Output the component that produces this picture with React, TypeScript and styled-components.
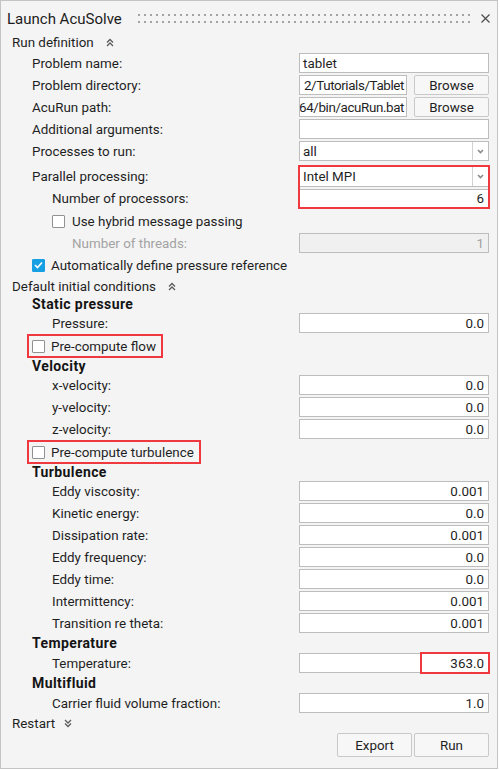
import React from "react";
import styled, { createGlobalStyle } from "styled-components";

const GlobalStyle = createGlobalStyle`
  html, body { margin: 0; padding: 0; background: #ffffff; }
  body {
    font-family: "Segoe UI", Roboto, "Liberation Sans", Arial, sans-serif;
    font-size: 13.4px;
    color: #1f1f1f;
  }
  * { box-sizing: border-box; }
`;

const Panel = styled.div`
  width: 498px;
  height: 769px;
  border: 1px solid #c4c4c4;
  background: #f4f4f4;
  display: flex;
  flex-direction: column;
`;

const TitleBar = styled.div`
  height: 31px;
  padding: 4px 7px 0 6px;
  display: flex;
  align-items: center;
`;

const Title = styled.span`
  font-size: 15px;
  color: #1c1c1c;
  white-space: nowrap;
`;

const Grip = styled.div`
  flex: 1;
  margin: 0 11px 0 16px;
  display: flex;
  flex-direction: column;
  gap: 5px;
`;

const DotRow = styled.div`
  height: 2px;
  background: repeating-linear-gradient(90deg, #a3a3a3 0 2px, transparent 2px 6px);
`;

const CloseButton = styled.span`
  width: 9px;
  height: 9px;
  display: flex;
`;

const SectionHeader = styled.div<{ $h?: number; $gap?: number }>`
  height: ${(p) => p.$h ?? 20}px;
  padding-left: 11px;
  display: flex;
  align-items: center;
  gap: ${(p) => p.$gap ?? 12}px;
  white-space: nowrap;
`;

const Chevron = styled.span`
  width: 8px;
  height: 9px;
  display: flex;
`;

const GroupTitle = styled.div<{ $h: number }>`
  height: ${(p) => p.$h}px;
  padding-left: 31px;
  display: flex;
  align-items: center;
  font-size: 14px;
  font-weight: 700;
  letter-spacing: 0.4px;
  color: #141414;
  white-space: nowrap;
`;

const Row = styled.div<{ $indent: number; $h?: number }>`
  height: ${(p) => p.$h ?? 22}px;
  padding-left: ${(p) => p.$indent}px;
  padding-right: 8px;
  display: flex;
  align-items: center;
`;

const Label = styled.span<{ $muted?: boolean }>`
  flex: 1;
  min-width: 0;
  white-space: nowrap;
  color: ${(p) => (p.$muted ? "#a3a3a3" : "#1f1f1f")};
`;

const Field = styled.div`
  position: relative;
  width: 190px;
  display: flex;
  align-items: center;
  gap: 7px;
`;

const TextBox = styled.div<{ $right?: boolean; $disabled?: boolean; $w?: number; $tight?: boolean }>`
  height: 20px;
  flex: ${(p) => (p.$w ? `0 0 ${p.$w}px` : "1")};
  min-width: 0;
  border: 1px solid #bdbdbd;
  background: ${(p) => (p.$disabled ? "#f0f0f0" : "#ffffff")};
  color: ${(p) => (p.$disabled ? "#a0a0a0" : "#1f1f1f")};
  display: flex;
  align-items: center;
  justify-content: ${(p) => (p.$right ? "flex-end" : "flex-start")};
  padding: ${(p) => (p.$tight ? "0 2px 0 1px" : "0 4px 0 3px")};
  letter-spacing: ${(p) => (p.$tight ? "-0.4px" : "normal")};
  overflow: hidden;
  white-space: nowrap;
`;

const Select = styled.div<{ $inBox?: boolean }>`
  height: 20px;
  flex: 1;
  background: #ffffff;
  border: ${(p) => (p.$inBox ? "none" : "1px solid #bdbdbd")};
  border-bottom: 1px solid #bdbdbd;
  display: flex;
  align-items: stretch;
`;

const SelectValue = styled.span`
  flex: 1;
  display: flex;
  align-items: center;
  padding-left: 3px;
  white-space: nowrap;
`;

const SelectArrow = styled.span`
  width: 16px;
  border-left: 1px solid #d2d2d2;
  display: flex;
  align-items: center;
  justify-content: center;
`;

const Button = styled.button<{ $h?: number }>`
  width: 75px;
  height: ${(p) => p.$h ?? 20}px;
  flex: 0 0 75px;
  border: 1px solid #c9c9c9;
  border-radius: 2px;
  background: #f7f7f7;
  color: #1f1f1f;
  font: inherit;
  padding: 0;
`;

const CheckRow = styled.div<{ $indent: number; $h?: number; $gap?: number }>`
  height: ${(p) => p.$h ?? 22}px;
  padding-left: ${(p) => p.$indent}px;
  display: flex;
  align-items: center;
  gap: ${(p) => p.$gap ?? 6}px;
  white-space: nowrap;
`;

const HighlightCheck = styled.div`
  height: 24px;
  border: 2px solid #f0393f;
  padding: 0 5px 0 3px;
  display: flex;
  align-items: center;
  gap: 6px;
  white-space: nowrap;
`;

const Box = styled.span<{ $checked?: boolean }>`
  width: 13px;
  height: 13px;
  flex: 0 0 13px;
  border: 1px solid ${(p) => (p.$checked ? "#179fe3" : "#929292")};
  background: ${(p) => (p.$checked ? "#179fe3" : "#ffffff")};
  border-radius: 1px;
  display: flex;
  align-items: center;
  justify-content: center;
`;

const ParallelGroup = styled.div`
  height: 48px;
  padding-left: 31px;
  padding-right: 7px;
  display: flex;
`;

const LabelStack = styled.div`
  flex: 1;
  display: flex;
  flex-direction: column;
  padding-top: 5px;
`;

const StackLabel = styled.div<{ $h: number; $indent?: number }>`
  height: ${(p) => p.$h}px;
  padding-left: ${(p) => p.$indent ?? 0}px;
  display: flex;
  align-items: center;
  white-space: nowrap;
`;

const RedFrame = styled.div`
  width: 192px;
  height: 44px;
  margin-top: 3px;
  border: 2px solid #f0393f;
  display: flex;
  flex-direction: column;
  gap: 2px;
`;

const FramedInput = styled.div`
  height: 18px;
  background: #ffffff;
  border-top: 1px solid #bdbdbd;
  display: flex;
  align-items: center;
  justify-content: flex-end;
  padding-right: 4px;
`;

const ValueMark = styled.div`
  position: absolute;
  top: -1px;
  bottom: -1px;
  right: -1px;
  width: 70px;
  border: 2px solid #f0393f;
  pointer-events: none;
`;

const Footer = styled.div`
  margin-top: 1px;
  padding-right: 8px;
  display: flex;
  justify-content: flex-end;
  gap: 2px;
`;

const Check = ({ checked }: { checked?: boolean }) => (
  <Box $checked={checked}>
    {checked && (
      <svg width="9" height="8" viewBox="0 0 9 8">
        <polyline points="1,4 3.5,6.5 8,1.5" fill="none" stroke="#ffffff" strokeWidth="1.6" />
      </svg>
    )}
  </Box>
);

const DoubleChevron = ({ down }: { down?: boolean }) => (
  <Chevron>
    <svg width="8" height="9" viewBox="0 0 8 9" style={down ? { transform: "rotate(180deg)" } : undefined}>
      <polyline points="1,4.5 4,1.5 7,4.5" fill="none" stroke="#5a5a5a" strokeWidth="1.3" />
      <polyline points="1,8 4,5 7,8" fill="none" stroke="#5a5a5a" strokeWidth="1.3" />
    </svg>
  </Chevron>
);

const Arrow = () => (
  <SelectArrow>
    <svg width="7" height="5" viewBox="0 0 7 5">
      <polyline points="1,1 3.5,3.5 6,1" fill="none" stroke="#8a8a8a" strokeWidth="1.6" />
    </svg>
  </SelectArrow>
);

const NumberRow = ({ label, value, indent = 51 }: { label: string; value: string; indent?: number }) => (
  <Row $indent={indent}>
    <Label>{label}</Label>
    <Field>
      <TextBox $right>{value}</TextBox>
    </Field>
  </Row>
);

const turbulence: [string, string][] = [
  ["Eddy viscosity:", "0.001"],
  ["Kinetic energy:", "0.0"],
  ["Dissipation rate:", "0.001"],
  ["Eddy frequency:", "0.0"],
  ["Eddy time:", "0.0"],
  ["Intermittency:", "0.001"],
  ["Transition re theta:", "0.001"],
];

const velocity: [string, string][] = [
  ["x-velocity:", "0.0"],
  ["y-velocity:", "0.0"],
  ["z-velocity:", "0.0"],
];

export default function App() {
  return (
    <>
      <GlobalStyle />
      <Panel>
        <TitleBar>
          <Title>Launch AcuSolve</Title>
          <Grip>
            <DotRow />
            <DotRow />
          </Grip>
          <CloseButton>
            <svg width="9" height="9" viewBox="0 0 9 9">
              <line x1="0.5" y1="0.5" x2="8.5" y2="8.5" stroke="#505050" strokeWidth="1.2" />
              <line x1="8.5" y1="0.5" x2="0.5" y2="8.5" stroke="#505050" strokeWidth="1.2" />
            </svg>
          </CloseButton>
        </TitleBar>

        <SectionHeader>
          Run definition
          <DoubleChevron />
        </SectionHeader>

        <Row $indent={31}>
          <Label>Problem name:</Label>
          <Field>
            <TextBox>tablet</TextBox>
          </Field>
        </Row>
        <Row $indent={31}>
          <Label>Problem directory:</Label>
          <Field>
            <TextBox $w={108} $right $tight>
              2/Tutorials/Tablet
            </TextBox>
            <Button>Browse</Button>
          </Field>
        </Row>
        <Row $indent={31}>
          <Label>AcuRun path:</Label>
          <Field>
            <TextBox $w={108} $right $tight>
              64/bin/acuRun.bat
            </TextBox>
            <Button>Browse</Button>
          </Field>
        </Row>
        <Row $indent={31}>
          <Label>Additional arguments:</Label>
          <Field>
            <TextBox />
          </Field>
        </Row>
        <Row $indent={31}>
          <Label>Processes to run:</Label>
          <Field>
            <Select>
              <SelectValue>all</SelectValue>
              <Arrow />
            </Select>
          </Field>
        </Row>

        <ParallelGroup>
          <LabelStack>
            <StackLabel $h={20}>Parallel processing:</StackLabel>
            <StackLabel $h={24} $indent={20}>
              Number of processors:
            </StackLabel>
          </LabelStack>
          <RedFrame>
            <Select $inBox>
              <SelectValue>Intel MPI</SelectValue>
              <Arrow />
            </Select>
            <FramedInput>6</FramedInput>
          </RedFrame>
        </ParallelGroup>

        <CheckRow $indent={51} $gap={7}>
          <Check />
          Use hybrid message passing
        </CheckRow>
        <Row $indent={71}>
          <Label $muted>Number of threads:</Label>
          <Field>
            <TextBox $right $disabled>
              1
            </TextBox>
          </Field>
        </Row>
        <CheckRow $indent={31}>
          <Check checked />
          Automatically define pressure reference
        </CheckRow>

        <SectionHeader>
          Default initial conditions
          <DoubleChevron />
        </SectionHeader>

        <GroupTitle $h={16}>Static pressure</GroupTitle>
        <NumberRow label="Pressure:" value="0.0" />
        <CheckRow $indent={26} $h={24}>
          <HighlightCheck>
            <Check />
            Pre-compute flow
          </HighlightCheck>
        </CheckRow>

        <GroupTitle $h={16}>Velocity</GroupTitle>
        {velocity.map(([l, v]) => (
          <NumberRow key={l} label={l} value={v} />
        ))}
        <CheckRow $indent={26} $h={24}>
          <HighlightCheck>
            <Check />
            Pre-compute turbulence
          </HighlightCheck>
        </CheckRow>

        <GroupTitle $h={16}>Turbulence</GroupTitle>
        {turbulence.map(([l, v]) => (
          <NumberRow key={l} label={l} value={v} />
        ))}

        <GroupTitle $h={18}>Temperature</GroupTitle>
        <Row $indent={51}>
          <Label>Temperature:</Label>
          <Field>
            <TextBox $right>363.0</TextBox>
            <ValueMark />
          </Field>
        </Row>

        <GroupTitle $h={18}>Multifluid</GroupTitle>
        <NumberRow label="Carrier fluid volume fraction:" value="1.0" />

        <SectionHeader $h={18} $gap={9}>
          Restart
          <DoubleChevron down />
        </SectionHeader>

        <Footer>
          <Button $h={24}>Export</Button>
          <Button $h={24}>Run</Button>
        </Footer>
      </Panel>
    </>
  );
}
